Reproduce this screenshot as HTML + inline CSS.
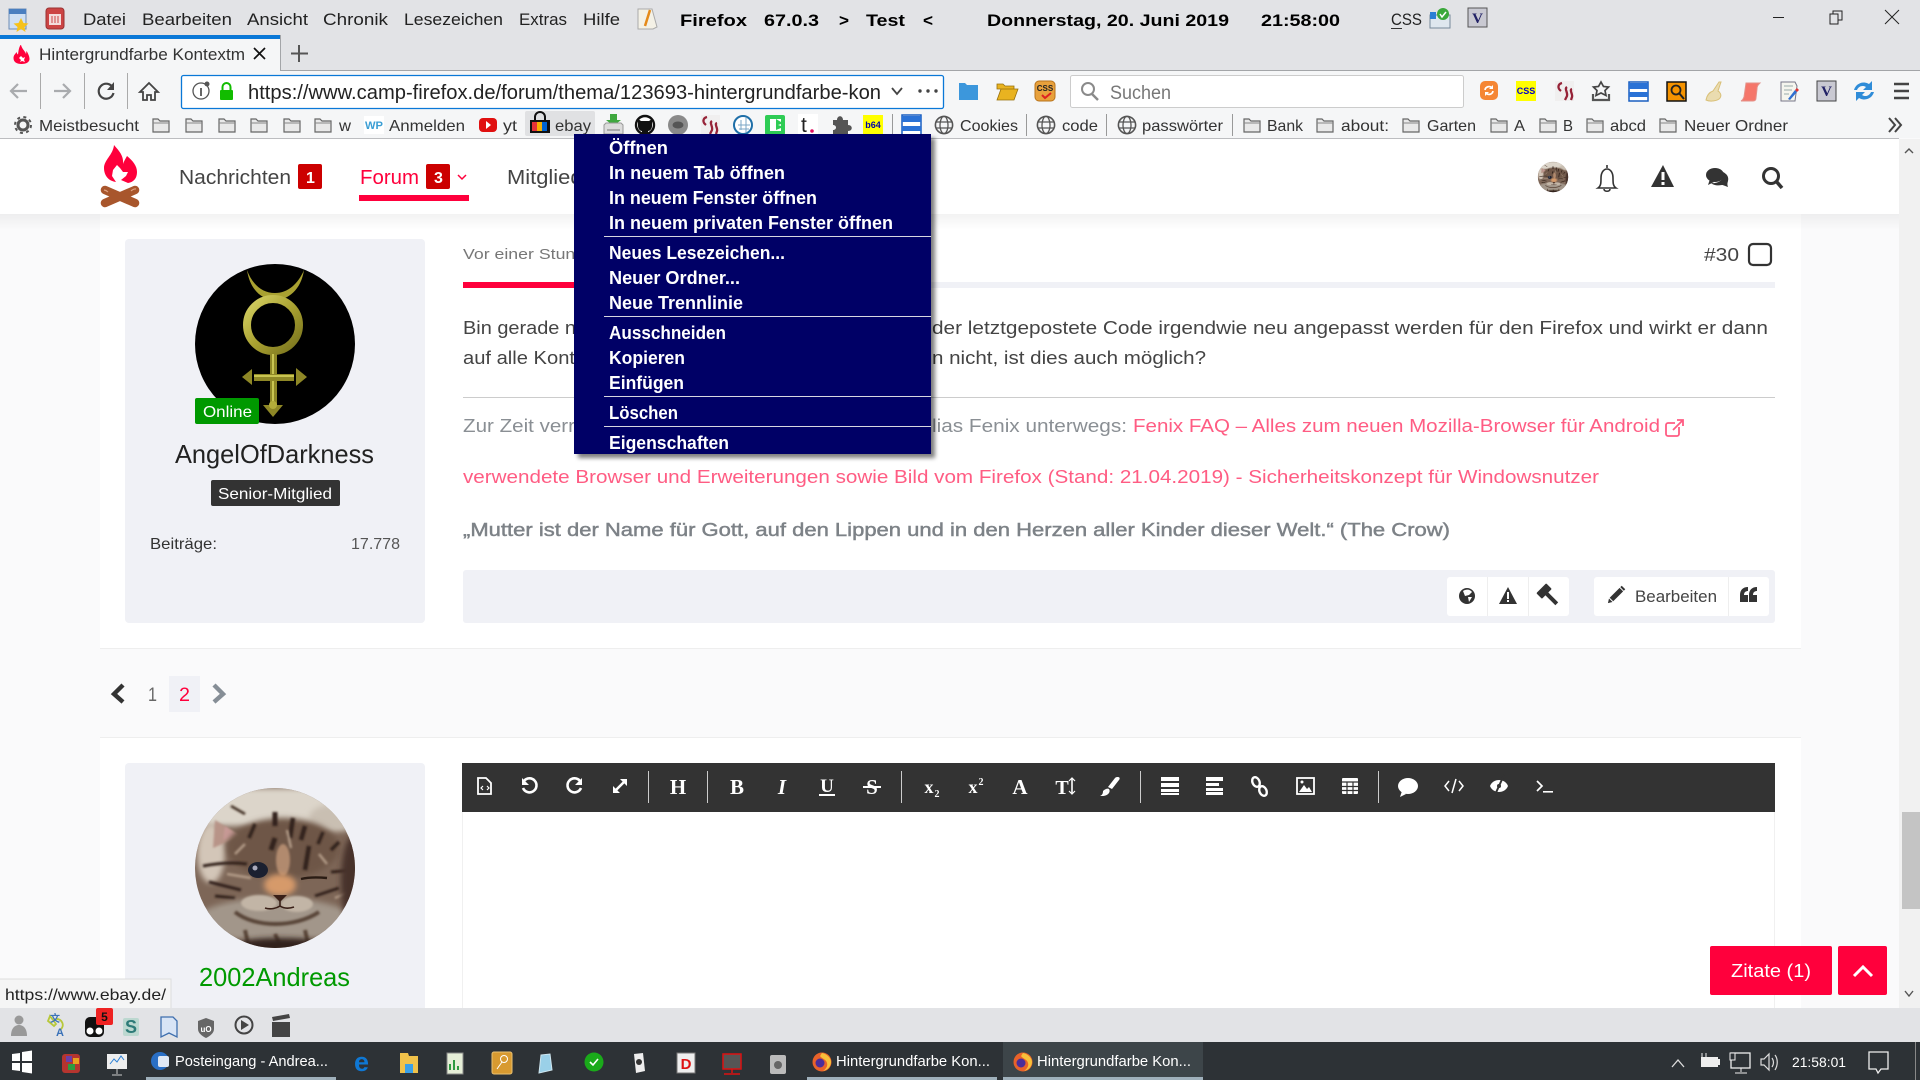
<!DOCTYPE html>
<html><head><meta charset="utf-8"><title>Hintergrundfarbe Kontextmenü</title>
<style>
html,body{margin:0;padding:0;background:#fafafb;overflow:hidden}
svg{display:block;font-family:"Liberation Sans",sans-serif}
.u{font-size:17px;fill:#222}.b{font-weight:bold;font-size:17px;fill:#000}
.m{font-weight:bold;font-size:18px;fill:#fff}
.p{font-size:18.4px;fill:#444}.g{font-size:18.4px;fill:#8a8f94}.l{font-size:18.4px;fill:#ff5c83}
.bm{font-size:16px;fill:#333}.t{font-size:15px;fill:#fff}
.ic{fill:#333}.w{fill:#fff}.f{fill:none;stroke:#fff;stroke-width:2}
.sf{font-family:"Liberation Serif",serif;font-weight:bold;fill:#fff;font-size:21px;text-anchor:middle}
</style></head><body>
<svg width="1920" height="1080" viewBox="0 0 1920 1080" xmlns="http://www.w3.org/2000/svg">
<defs>
<filter id="bl" x="-30%" y="-30%" width="160%" height="160%"><feGaussianBlur stdDeviation="3"/></filter>
<filter id="bs" x="-30%" y="-30%" width="160%" height="160%"><feGaussianBlur stdDeviation="1"/></filter>
<filter id="sh" x="-5%" y="-5%" width="110%" height="110%"><feGaussianBlur stdDeviation="2"/></filter>
<linearGradient id="hs" x1="0" y1="0" x2="0" y2="1"><stop offset="0" stop-color="#000" stop-opacity=".05"/><stop offset="1" stop-color="#000" stop-opacity="0"/></linearGradient>
<linearGradient id="gold" gradientUnits="userSpaceOnUse" x1="245" y1="295" x2="303" y2="355"><stop offset="0" stop-color="#dcd86c"/><stop offset=".5" stop-color="#a9a131"/><stop offset="1" stop-color="#6f6a1a"/></linearGradient>
<clipPath id="cc"><circle r="80"/></clipPath>
<symbol id="fo" viewBox="0 0 18 18" overflow="visible"><path d="M1 16V3h5l2 2h9v11z" fill="#e9e9e9" stroke="#666" stroke-width="1.2"/><path d="M1 7h16" stroke="#888" stroke-width="1"/></symbol>
<symbol id="gl" viewBox="0 0 20 20"><circle cx="10" cy="10" r="8.6" fill="none" stroke="#555" stroke-width="1.6"/><ellipse cx="10" cy="10" rx="4" ry="8.6" fill="none" stroke="#555" stroke-width="1.3"/><path d="M2 7h16M2 13h16" stroke="#555" stroke-width="1.3"/></symbol>
<g id="cat"><g clip-path="url(#cc)">
<rect x="-80" y="-80" width="160" height="160" fill="#7d6657"/>
<rect x="-80" y="-80" width="160" height="38" fill="#dcd5ca" filter="url(#bl)"/>
<ellipse cx="60" cy="-50" rx="26" ry="14" fill="#c9bfb2" filter="url(#bl)"/>
<ellipse cx="-64" cy="-15" rx="14" ry="30" fill="#d3c6b8" filter="url(#bl)"/>
<path d="M-62-20l2-28 26 16z" fill="#b89488" filter="url(#bs)"/><path d="M-52-28l2-14 12 9z" fill="#c79a96" filter="url(#bs)"/>
<path d="M-44-62l14 8" stroke="#3f2d22" stroke-width="2.5" filter="url(#bs)"/>
<ellipse cx="8" cy="-20" rx="56" ry="30" fill="#6e5646" filter="url(#bl)"/>
<g fill="none" stroke="#33241b" filter="url(#bs)">
<path d="M0-56l0 14M0-30l-4 12" stroke-width="5"/><path d="M18-50l-3 20M30-42l-4 14M34-22l-4 24" stroke-width="4.500"/><path d="M-20-44l-6 14M48-36l-5 12M64-26l-8 8" stroke-width="3.500"/>
<path d="M-72-2c16-3 30-4 44-2M-66 14l32 8M-60 28l20 2M40 28l24-8M56 4l24-2" stroke-width="3"/>
</g>
<g fill="none" stroke="#b39c88" stroke-width="2.500" filter="url(#bs)"><path d="M-30-24l-10 10M-48 6l24 4M12-38l4 18M44-14l8 10M60 30l14-6M-56 42l20-4"/></g>
<ellipse cx="8" cy="-8" rx="7" ry="16" fill="#b18a6e" filter="url(#bs)"/>
<ellipse cx="5" cy="17" rx="16" ry="11" fill="#d69a6a" filter="url(#bl)"/>
<ellipse cx="0" cy="52" rx="78" ry="22" fill="#a2968a" filter="url(#bl)"/>
<ellipse cx="-16" cy="35" rx="18" ry="8" fill="#c2b5a6" filter="url(#bs)"/><ellipse cx="22" cy="36" rx="16" ry="8" fill="#c2b5a6" filter="url(#bs)"/>
<path d="M-40 44c20 16 60 16 84 0M-30 62l4 18M0 66l6 14M30 62l4 18" stroke="#594437" stroke-width="4" fill="none" filter="url(#bs)"/>
<ellipse cx="5" cy="82" rx="55" ry="12" fill="#33221a" filter="url(#bl)"/>
<ellipse cx="78" cy="14" rx="12" ry="46" fill="#46302a" filter="url(#bl)"/>
<ellipse cx="-17" cy="2" rx="10" ry="8" fill="#1b2030"/><circle cx="-20" cy="0" r="2.500" fill="#aab"/>
<path d="M-2 27h14l-7 7z" fill="#3a2018"/><path d="M5 33v6M-10 40c6 2 12 0 15-2 3 2 8 3 14 1" stroke="#3a2018" stroke-width="1.600" fill="none"/>
<path d="M26 11c8-2 16-2 26-1" stroke="#2a1c14" stroke-width="2.400" fill="none"/>
</g></g>
</defs>

<!-- page background -->
<rect width="1920" height="1080" fill="#fafafb"/>
<rect x="100" y="214" width="1701" height="434" fill="#fff"/><rect x="100" y="648" width="1701" height="1" fill="#eee"/>
<rect x="100" y="738" width="1701" height="280" fill="#fff"/><rect x="100" y="737" width="1701" height="1" fill="#eee"/>

<!-- sidebar 1 -->
<rect x="125" y="239" width="300" height="384" rx="4" fill="#f0f1f6"/>
<circle cx="275" cy="344" r="80" fill="#000"/>
<path d="M247 270C252 284 262 293 275 293 288 293 298 284 304 270 301 290 288 300 275 300 262 300 250 290 247 270z" fill="#a9a131"/>
<ellipse cx="273" cy="325" rx="26" ry="26" fill="none" stroke="url(#gold)" stroke-width="8"/>
<rect x="270" y="354" width="7" height="58" fill="#8f8826"/><rect x="272" y="354" width="2" height="58" fill="#c9c552"/>
<rect x="254" y="374" width="40" height="7" fill="#8f8826"/><rect x="254" y="375" width="40" height="2" fill="#c9c552"/>
<path d="M242 377l10-8v16zM307 377l-11-9v18zM263 405h20l-10 12z" fill="#8e8726"/><circle cx="273" cy="405" r="4" fill="#b3ad3a"/>
<rect x="195" y="398" width="64" height="26" rx="2" fill="#090"/>
<text x="203" y="417" font-size="16" fill="#fff" textLength="49" lengthAdjust="spacingAndGlyphs">Online</text>
<text x="175" y="463" font-size="26" fill="#222" textLength="199" lengthAdjust="spacingAndGlyphs">AngelOfDarkness</text>
<rect x="211" y="480" width="129" height="26" rx="2" fill="#333"/>
<text x="218" y="499" font-size="16" fill="#fff" textLength="114" lengthAdjust="spacingAndGlyphs">Senior-Mitglied</text>
<text x="150" y="549" font-size="16" fill="#333" textLength="67" lengthAdjust="spacingAndGlyphs">Beiträge:</text>
<text x="351" y="549" font-size="16" fill="#555" textLength="49" lengthAdjust="spacingAndGlyphs">17.778</text>

<!-- post -->
<text x="463" y="259" font-size="15" fill="#777" textLength="132" lengthAdjust="spacingAndGlyphs">Vor einer Stunde</text>
<rect x="463" y="282" width="1312" height="6" fill="#f0f1f6"/><rect x="463" y="282" width="130" height="6" fill="#ff003c"/>
<text x="1704" y="261" font-size="18.4" fill="#444" textLength="35" lengthAdjust="spacingAndGlyphs">#30</text>
<rect x="1749" y="244" width="22" height="21" rx="4" fill="none" stroke="#333" stroke-width="2.200"/>
<text x="463" y="334" class="p" textLength="113" lengthAdjust="spacingAndGlyphs">Bin gerade n</text>
<text x="932" y="334" class="p" textLength="836" lengthAdjust="spacingAndGlyphs">der letztgepostete Code irgendwie neu angepasst werden für den Firefox und wirkt er dann</text>
<text x="463" y="364" class="p" textLength="112" lengthAdjust="spacingAndGlyphs">auf alle Kont</text>
<text x="932" y="364" class="p" textLength="274" lengthAdjust="spacingAndGlyphs">n nicht, ist dies auch möglich?</text>
<rect x="463" y="397" width="1312" height="1" fill="#ccc"/>
<text x="463" y="432" class="g" textLength="112" lengthAdjust="spacingAndGlyphs">Zur Zeit verr</text>
<text x="932" y="432" class="g" textLength="195" lengthAdjust="spacingAndGlyphs">lias Fenix unterwegs:</text>
<text x="1133" y="432" class="l" textLength="527" lengthAdjust="spacingAndGlyphs">Fenix FAQ – Alles zum neuen Mozilla-Browser für Android</text>
<g fill="none" stroke="#ff5c83" stroke-width="1.800"><path d="M1679 427v7a2 2 0 0 1-2 2h-9a2 2 0 0 1-2-2v-9a2 2 0 0 1 2-2h7"/><path d="M1673 430l10-10M1677 420h6v6"/></g>
<text x="463" y="483" class="l" textLength="1136" lengthAdjust="spacingAndGlyphs">verwendete Browser und Erweiterungen sowie Bild vom Firefox (Stand: 21.04.2019) - Sicherheitskonzept für Windowsnutzer</text>
<text x="463" y="536" class="g" style="fill:#7d8287;stroke:#7d8287;stroke-width:.45" textLength="987" lengthAdjust="spacingAndGlyphs">„Mutter ist der Name für Gott, auf den Lippen und in den Herzen aller Kinder dieser Welt.“ (The Crow)</text>

<!-- post footer -->
<rect x="463" y="570" width="1312" height="53" rx="3" fill="#f0f1f6"/>
<rect x="1447" y="577" width="122" height="39" rx="3" fill="#fff"/><rect x="1487" y="577" width="1" height="39" fill="#eee"/><rect x="1528" y="577" width="1" height="39" fill="#eee"/>
<rect x="1594" y="577" width="175" height="39" rx="3" fill="#fff"/><rect x="1728" y="577" width="1" height="39" fill="#eee"/>
<circle cx="1467" cy="596" r="8" fill="#333"/><path d="M1463 591c3-2 7-2 9 1l-3 3-4 1zM1468 597l4 0-3 5z" fill="#fff"/>
<path d="M1508 587l9 17h-18z" fill="#333"/><path d="M1507 592h2v7h-2zM1507 600h2v2h-2z" fill="#fff"/>
<g fill="#333" transform="rotate(-45 1549 596)"><rect x="1542" y="585" width="14" height="8" rx="1"/><rect x="1547" y="592" width="4" height="15"/></g>
<g transform="rotate(45 1615 596)" fill="#333"><rect x="1612.500" y="587" width="5" height="14"/><path d="M1612.500 602h5l-2.500 4z"/><rect x="1612.500" y="584" width="5" height="2"/></g>
<text x="1635" y="602" font-size="16.500" fill="#444" textLength="82" lengthAdjust="spacingAndGlyphs">Bearbeiten</text>
<path d="M1748 587c-5 0-8 3-8 8v7h8v-7h-4c0-3 2-4 4-4zM1757 587c-5 0-8 3-8 8v7h8v-7h-4c0-3 2-4 4-4z" fill="#333"/>

<!-- pagination -->
<path d="M123 685l-9 9 9 8" fill="none" stroke="#333" stroke-width="4.400"/>
<text x="148" y="701" font-size="19" fill="#666" textLength="9" lengthAdjust="spacingAndGlyphs">1</text>
<rect x="169" y="676" width="31" height="36" fill="#f0f1f6"/>
<text x="179" y="701" font-size="19" fill="#ff003c" textLength="11" lengthAdjust="spacingAndGlyphs">2</text>
<path d="M214 685l9 9-9 8" fill="none" stroke="#868e96" stroke-width="4.400"/>

<!-- second post -->
<rect x="125" y="763" width="300" height="260" rx="4" fill="#f0f1f6"/>
<use href="#cat" transform="translate(275 868)"/>
<text x="199" y="986" font-size="26" fill="#090" textLength="151" lengthAdjust="spacingAndGlyphs">2002Andreas</text>
<rect x="462" y="763" width="1313" height="49" fill="#333"/>
<rect x="462" y="812" width="1" height="200" fill="#f0f0f0"/><rect x="1774" y="812" width="1" height="200" fill="#f0f0f0"/>
<g fill="#ccc"><rect x="648" y="771" width="1" height="32"/><rect x="707" y="771" width="1" height="32"/><rect x="901" y="771" width="1" height="32"/><rect x="1140" y="771" width="1" height="32"/><rect x="1378" y="771" width="1" height="32"/></g>
<!-- editor icons -->
<path d="M478 778h8l5 5v11h-13z" fill="none" stroke="#fff" stroke-width="1.800"/><path d="M483 786l-2 2 2 2M487 786l2 2-2 2" fill="none" stroke="#fff" stroke-width="1.200"/>
<path d="M524 781a7 7 0 1 1-1 7" fill="none" stroke="#fff" stroke-width="2.600"/><path d="M522 778v7h7z" class="w"/>
<path d="M580 781a7 7 0 1 0 1 7" fill="none" stroke="#fff" stroke-width="2.600"/><path d="M582 778v7h-7z" class="w"/>
<path d="M615 791l10-10" stroke="#fff" stroke-width="2.600"/><path d="M620 779h7v7zM613 786v7h7z" class="w"/>
<text x="678" y="794" class="sf">H</text>
<text x="737" y="794" class="sf">B</text>
<text x="782" y="794" class="sf" font-style="italic">I</text>
<text x="827" y="792" class="sf" style="font-size:19px">U</text><rect x="819" y="794" width="16" height="2" fill="#fff"/>
<text x="872" y="794" class="sf">S</text><rect x="863" y="786" width="18" height="2" fill="#fff"/>
<text x="929" y="793" class="sf" style="font-size:18px">x</text><text x="937" y="797" class="sf" style="font-size:10px">2</text>
<text x="973" y="793" class="sf" style="font-size:18px">x</text><text x="981" y="785" class="sf" style="font-size:10px">2</text>
<text x="1020" y="794" class="sf">A</text>
<text x="1062" y="794" class="sf" style="font-size:20px">T</text><path d="M1072 779v14" stroke="#fff" stroke-width="1.600"/><path d="M1069 781l3-3 3 3M1069 791l3 3 3-3" stroke="#fff" fill="none" stroke-width="1.200"/>
<path d="M1118 777c2 0 2 2 1 3l-7 9-4-2 7-9c1-1 2-1 3-1zM1103 791c2-2 5-3 6-2 2 3-1 7-7 7-1 0-1 0-2 0 2-1 3-2 3-5z" class="w"/>
<g fill="#fff"><path d="M1161 777h18v4h-18zM1161 783h18v4h-18zM1161 789h18v3h-18zM1161 793h18v2h-18z"/><path d="M1206 777h17v4h-17zM1206 783h13v3h-13zM1206 788h17v3h-17zM1206 792h17v3h-17z"/></g>
<g fill="none" stroke="#fff" stroke-width="2.400"><ellipse cx="1256" cy="782" rx="3.500" ry="5" transform="rotate(-25 1256 782)"/><ellipse cx="1263" cy="791" rx="3.500" ry="5" transform="rotate(-25 1263 791)"/></g>
<rect x="1297" y="778" width="17" height="16" fill="none" stroke="#fff" stroke-width="1.800"/><path d="M1299 792l5-7 3 4 2-2 3 5z" class="w"/><circle cx="1302" cy="782" r="1.500" class="w"/>
<rect x="1342" y="778" width="16" height="16" rx="1" class="w"/><path d="M1347 782v12M1353 782v12M1342 782h16M1342 786.500h16M1342 790.500h16" stroke="#333" stroke-width="1.200"/>
<ellipse cx="1408" cy="786" rx="10" ry="8" class="w"/><path d="M1402 791l-2 6 6-3z" class="w"/>
<path d="M1449 781l-4 5 4 5M1459 781l4 5-4 5M1456 779l-4 14" fill="none" stroke="#fff" stroke-width="1.500"/>
<path d="M1490 786c3-8 15-8 18 0-3 8-15 8-18 0z" class="w"/><path d="M1494 797l10-22" stroke="#333" stroke-width="2"/><circle cx="1499" cy="786" r="2" fill="#333"/>
<path d="M1537 781l5 5-5 5" fill="none" stroke="#fff" stroke-width="1.700"/><rect x="1543" y="791" width="10" height="1.600" class="w"/>

<!-- scrollbar -->
<rect x="1899" y="139" width="21" height="869" fill="#f1f1f1"/>
<rect x="1902" y="812" width="18" height="97" fill="#c4c4c4"/>
<path d="M1905 153l4-4 4 4M1905 991l4 5 4-5" fill="none" stroke="#555" stroke-width="1.400"/>

<!-- Zitate -->
<rect x="1710" y="946" width="122" height="49" rx="2" fill="#ff003c"/>
<text x="1731" y="977" font-size="18.400" fill="#fff" textLength="80" lengthAdjust="spacingAndGlyphs">Zitate (1)</text>
<rect x="1838" y="946" width="49" height="49" rx="2" fill="#ff003c"/>
<path d="M1854 976l9-9 9 9" fill="none" stroke="#fff" stroke-width="3"/>

<!-- header -->
<rect y="214" width="1899" height="16" fill="url(#hs)"/>
<rect y="139" width="1899" height="75" fill="#fff"/>
<path d="M114 145C118 150 124 155 123 164 124 161 126 158 127 156 133 161 137 166 137 172 137 178 134 182 128 183L121 180 126 176 128 172 123 172 120 168 117 165 113 170 112 176 116 182C108 181 104 175 104 168 104 160 113 155 114 145z" fill="#ff003c"/>
<g fill="none" stroke-linecap="round"><path d="M105 190l30 13M135 190l-30 13" stroke="#a8562c" stroke-width="8.500"/></g>
<path d="M136 189a2 4 60 0 0-5 2M104 190a2 4-60 0 1 4 2" stroke="#e0a080" stroke-width="1.200" fill="none"/>
<text x="179" y="184" font-size="20" fill="#444" textLength="112" lengthAdjust="spacingAndGlyphs">Nachrichten</text>
<rect x="298" y="164" width="24" height="25" rx="2" fill="#c00"/><text x="306" y="183" font-size="16" font-weight="bold" fill="#fff">1</text>
<text x="360" y="184" font-size="20" fill="#ff003c" textLength="59" lengthAdjust="spacingAndGlyphs">Forum</text>
<rect x="426" y="164" width="24" height="25" rx="2" fill="#c00"/><text x="434" y="183" font-size="16" font-weight="bold" fill="#fff">3</text>
<path d="M458 175l4 4 4-4" fill="none" stroke="#ff003c" stroke-width="1.500"/>
<rect x="359" y="195" width="110" height="6" fill="#ff003c"/>
<text x="507" y="184" font-size="20" fill="#444" textLength="95" lengthAdjust="spacingAndGlyphs">Mitglieder</text>
<use href="#cat" transform="translate(1553 177) scale(.19)"/>
<path d="M1598 188c3-2 3-5 3-10 0-6 3-9 6-9s6 3 6 9c0 5 0 8 3 10z" fill="none" stroke="#333" stroke-width="1.600"/><path d="M1607 165v3M1604 189c0 3 6 3 6 0" stroke="#333" stroke-width="1.600" fill="none"/>
<path d="M1663 165l11 22h-23z" fill="#333"/><path d="M1661.500 172h3v8h-3zM1661.500 182h3v3h-3z" fill="#fff"/>
<ellipse cx="1715" cy="175" rx="9" ry="7" fill="#333"/><path d="M1710 179l-2 6 6-3z" fill="#333"/><path d="M1723 172c4 2 6 5 5 9-.5 2-1 3 0 6-3-1-5-2-6-2-5 1-9 0-11-2 8 1 14-4 12-11z" fill="#333"/>
<circle cx="1771" cy="176" r="7.500" fill="none" stroke="#333" stroke-width="3"/><path d="M1776 181l6 7" stroke="#333" stroke-width="3.600"/>

<!-- title bar -->
<rect width="1920" height="70" fill="#e2e3e6"/>
<rect x="9" y="9" width="17" height="20" fill="#cfe0f4" stroke="#6d8cb5"/><rect x="9" y="9" width="17" height="5" fill="#4a7fc0"/><path d="M21 18l2.500 5 5 .5-4 3.500 1 5-4.500-3-4.500 3 1-5-4-3.500 5-.5z" fill="#f6c21b"/>
<rect x="46" y="8" width="18" height="21" rx="3" fill="#c44" stroke="#933"/><rect x="49" y="14" width="12" height="11" fill="#f3dcdc"/><path d="M52 16v7M55 16v7M58 16v7" stroke="#c44"/>
<text x="83" y="25" class="u" textLength="43" lengthAdjust="spacingAndGlyphs">Datei</text>
<text x="142" y="25" class="u" textLength="90" lengthAdjust="spacingAndGlyphs">Bearbeiten</text>
<text x="247" y="25" class="u" textLength="61" lengthAdjust="spacingAndGlyphs">Ansicht</text>
<text x="323" y="25" class="u" textLength="65" lengthAdjust="spacingAndGlyphs">Chronik</text>
<text x="404" y="25" class="u" textLength="99" lengthAdjust="spacingAndGlyphs">Lesezeichen</text>
<text x="519" y="25" class="u" textLength="48" lengthAdjust="spacingAndGlyphs">Extras</text>
<text x="583" y="25" class="u" textLength="37" lengthAdjust="spacingAndGlyphs">Hilfe</text>
<path d="M638 9h14l5 18-4 2h-15z" fill="#f4f1e6" stroke="#aaa"/><path d="M650 10l-5 16" stroke="#e58a1a" stroke-width="2.500"/>
<text x="680" y="26" class="b" textLength="67" lengthAdjust="spacingAndGlyphs">Firefox</text>
<text x="764" y="26" class="b" textLength="55" lengthAdjust="spacingAndGlyphs">67.0.3</text>
<text x="839" y="26" class="b" textLength="10" lengthAdjust="spacingAndGlyphs">&gt;</text>
<text x="866" y="26" class="b" textLength="39" lengthAdjust="spacingAndGlyphs">Test</text>
<text x="923" y="26" class="b" textLength="10" lengthAdjust="spacingAndGlyphs">&lt;</text>
<text x="987" y="26" class="b" textLength="242" lengthAdjust="spacingAndGlyphs">Donnerstag, 20. Juni 2019</text>
<text x="1261" y="26" class="b" textLength="79" lengthAdjust="spacingAndGlyphs">21:58:00</text>
<text x="1391" y="25" class="u" textLength="31" lengthAdjust="spacingAndGlyphs">CSS</text><rect x="1391" y="28" width="11" height="1" fill="#333"/>
<rect x="1430" y="15" width="20" height="13" fill="#dfe7ee" stroke="#789"/><path d="M1430 12h6v7h-6z" fill="#2a7fd5"/><circle cx="1443" cy="14" r="6" fill="#3aa83a"/><path d="M1440 14l2 3 4-5" stroke="#fff" fill="none" stroke-width="1.500"/>
<rect x="1468" y="8" width="19" height="19" fill="#c9c9d2" stroke="#555"/><text x="1477.500" y="23" text-anchor="middle" font-family="Liberation Serif" font-weight="bold" font-size="15" fill="#226">V</text>
<rect x="1773" y="17" width="11" height="1" fill="#222"/>
<rect x="1830" y="14" width="8" height="10" fill="none" stroke="#222"/><path d="M1833 14v-3h9v9h-4" fill="none" stroke="#222"/>
<path d="M1885 10l14 14M1899 10l-14 14" stroke="#222" stroke-width="1"/>
<!-- tab -->
<rect y="70" width="1920" height="1" fill="#a3a5a8"/>
<path d="M0 35h280v36H0z" fill="#f5f6f7"/><rect x="280" y="35" width="1" height="35" fill="#a3a5a8"/><rect y="35" width="280" height="4" fill="#0a78d7"/>
<path d="M21 45c1 4 4 6 5 9 .5-1 0-2 .5-3 2 3 3 6 3 8 0 3-3 5-8 5-5 0-8-2-8-6 0-3 2-4 3-6 .5 1 .5 2 1.500 2.500 .5-3 .5-6 2.500-9.500z" fill="#ff003c"/><path d="M21 56l2 2 2-1-1 3 1 2-3-1-2 1 1-2-2-2z" fill="#fff"/>
<text x="39" y="60" font-size="17" fill="#333" textLength="206" lengthAdjust="spacingAndGlyphs">Hintergrundfarbe Kontextm</text>
<path d="M254 48l11 11M265 48l-11 11" stroke="#111" stroke-width="1.700"/>
<path d="M299 45v17M291 53.500h17" stroke="#555" stroke-width="2"/>
<!-- nav toolbar -->
<rect y="71" width="1920" height="67" fill="#f5f6f7"/><rect y="138" width="1899" height="1" fill="#bcbdc0"/>
<path d="M27 91H12M18 84l-7 7 7 7" fill="none" stroke="#a9abae" stroke-width="2.200"/>
<rect x="40" y="73" width="1" height="36" fill="#aaa"/>
<path d="M54 91h15M63 84l7 7-7 7" fill="none" stroke="#a9abae" stroke-width="2.200"/>
<rect x="84" y="73" width="1" height="36" fill="#aaa"/>
<path d="M113 88a7.500 7.500 0 1 0 .5 5" fill="none" stroke="#444" stroke-width="2.200"/><path d="M114 82v8h-7z" fill="#444"/>
<rect x="127" y="73" width="1" height="36" fill="#aaa"/>
<path d="M149 83l-9 9h3v8h4v-5h4v5h4v-8h3z" fill="#f5f6f7" stroke="#444" stroke-width="1.800"/>
<rect x="181.500" y="75.500" width="762" height="33" rx="2" fill="#fff" stroke="#0a78d7" stroke-width="1.300"/>
<circle cx="201" cy="91" r="8" fill="none" stroke="#555" stroke-width="1.300"/><path d="M201 88v8" stroke="#555" stroke-width="1.800"/><circle cx="207" cy="84" r="2.500" fill="#555"/>
<rect x="220" y="90" width="13" height="10" rx="1" fill="#12bc00"/><path d="M222.500 90v-3a4 4 0 0 1 8 0v3" fill="none" stroke="#12bc00" stroke-width="2"/>
<text x="248" y="99" font-size="20" fill="#222" textLength="633" lengthAdjust="spacingAndGlyphs">https://www.camp-firefox.de/forum/thema/123693-hintergrundfarbe-kon</text>
<path d="M892 88l5 6 5-6" fill="none" stroke="#444" stroke-width="1.800"/>
<circle cx="920" cy="91" r="1.700" fill="#444"/><circle cx="928" cy="91" r="1.700" fill="#444"/><circle cx="936" cy="91" r="1.700" fill="#444"/>
<path d="M959 83h6l2 2h11v15h-19z" fill="#3c97dc"/>
<path d="M997 84h6l2 2h9v3h-17zM997 100l4-11h17l-4 11z" fill="#e9b320" stroke="#97700c" stroke-width=".8"/>
<rect x="1035" y="81" width="20" height="20" rx="4" fill="#e8a13c" stroke="#b8741c"/><text x="1045" y="91" text-anchor="middle" font-size="8" font-weight="bold" fill="#222">CSS</text><path d="M1042 95l3 3 6-5" stroke="#d22" stroke-width="2" fill="none"/>
<rect x="1070.500" y="75.500" width="393" height="32" rx="2" fill="#fff" stroke="#ccc"/>
<circle cx="1088" cy="89" r="6" fill="none" stroke="#8a8a8a" stroke-width="2"/><path d="M1092 94l6 6" stroke="#8a8a8a" stroke-width="2.400"/>
<text x="1110" y="99" font-size="19" fill="#777" textLength="61" lengthAdjust="spacingAndGlyphs">Suchen</text>
<rect x="1480" y="81" width="18" height="19" rx="5" fill="#f58634"/><path d="M1485 90a4 4 0 0 1 7-2M1493 91a4 4 0 0 1-7 2" fill="none" stroke="#fff" stroke-width="1.700"/><path d="M1493 85v4h-4zM1485 96v-4h4z" fill="#fff"/>
<rect x="1516" y="81" width="20" height="20" fill="#ff0"/><text x="1526" y="94" text-anchor="middle" font-size="9" font-weight="bold" fill="#00c">CSS</text>
<rect x="1555" y="81" width="19" height="20" fill="#f0efef"/><path d="M1562 83c-4 1-5 5-1 8M1567 87c-3 2 1 5 0 9l-2 4M1572 89c-3 1 1 5 0 8l-1 3" fill="none" stroke="#962338" stroke-width="2.300"/>
<path d="M1601 82l2.500 4.500 5 .5-3.500 3.500 1 5-5-2.500-5 2.500 1-5-3.500-3.500 5-.5z" fill="#f5f6f7" stroke="#444" stroke-width="1.700"/><path d="M1593 94v6h16v-6" fill="none" stroke="#555" stroke-width="2.200"/>
<rect x="1629" y="82" width="19" height="19" fill="#fff" stroke="#1a5fc0" stroke-width="1.500"/><rect x="1629" y="83" width="19" height="6" fill="#2a72d6"/><rect x="1629" y="92" width="19" height="5" fill="#2a72d6"/>
<rect x="1667" y="82" width="19" height="19" fill="#f59300" stroke="#111" stroke-width="1.500"/><circle cx="1676" cy="90" r="4.500" fill="none" stroke="#222" stroke-width="1.800"/><path d="M1679 93l5 6" stroke="#222" stroke-width="2"/>
<path d="M1719 82l-6 9c-3 1-6 4-7 9 4 2 12 1 14-2 2-3 0-6-2-7l3-9z" fill="#eadcb0" stroke="#d9c078"/>
<path d="M1746 83h14c-2 2-3 3-3 6l-1 9c0 2-1 3-3 3h-12c2-1 2-2 3-4z" fill="#f5766a" stroke="#e4928a"/>
<path d="M1781 82h14l2 4-2 15h-14z" fill="#f5f5ee" stroke="#778"/><path d="M1784 86h9M1784 90h8M1784 94h5" stroke="#9aa" stroke-width="1"/><path d="M1788 99l7-9 2 2-7 8z" fill="#2f6fd0"/><path d="M1795 90l2-2 2 2-2 2z" fill="#d33"/>
<rect x="1817" y="81" width="19" height="20" fill="#c9c9d2" stroke="#444"/><text x="1826.500" y="96" text-anchor="middle" font-family="Liberation Serif" font-weight="bold" font-size="15" fill="#226">V</text>
<path d="M1854 90a10 10 0 0 1 15-6l3-3v9h-9l3-3a6 6 0 0 0-9 3zM1874 92a10 10 0 0 1-15 6l-3 3v-9h9l-3 3a6 6 0 0 0 9-3z" fill="#2f8cd8"/>
<path d="M1894 84h15M1894 91h15M1894 98h15" stroke="#444" stroke-width="2.400"/>
<!-- bookmarks -->
<circle cx="23" cy="125" r="5" fill="none" stroke="#555" stroke-width="3"/><circle cx="23" cy="125" r="8" fill="none" stroke="#555" stroke-width="2" stroke-dasharray="3 3.300"/>
<text x="39" y="131" class="bm" textLength="100" lengthAdjust="spacingAndGlyphs">Meistbesucht</text>
<use href="#fo" x="152" y="116" width="18" height="18"/><use href="#fo" x="185" y="116" width="18" height="18"/><use href="#fo" x="218" y="116" width="18" height="18"/><use href="#fo" x="250" y="116" width="18" height="18"/><use href="#fo" x="283" y="116" width="18" height="18"/><use href="#fo" x="314" y="116" width="18" height="18"/>
<text x="339" y="131" class="bm" textLength="12" lengthAdjust="spacingAndGlyphs">w</text>
<rect x="364" y="116" width="20" height="18" fill="#fff"/><text x="365" y="129" font-size="11" font-weight="bold" fill="#3b9ed4" textLength="18" lengthAdjust="spacingAndGlyphs">WP</text>
<text x="389" y="131" class="bm" textLength="76" lengthAdjust="spacingAndGlyphs">Anmelden</text>
<rect x="479" y="118" width="18" height="14" rx="4" fill="#e01010"/><path d="M486 121l5 4-5 4z" fill="#fff"/>
<text x="503" y="131" class="bm" textLength="14" lengthAdjust="spacingAndGlyphs">yt</text>
<rect x="525" y="111" width="70" height="25" rx="2" fill="#e0e1e3"/>
<rect x="530" y="120" width="20" height="13" fill="#111"/><rect x="532" y="122" width="5" height="9" fill="#e53238"/><rect x="537" y="122" width="5" height="9" fill="#f5af02"/><rect x="542" y="122" width="5" height="9" fill="#0064d2"/><path d="M535 120v-3a5 5 0 0 1 10 0v3" fill="none" stroke="#111" stroke-width="2"/>
<text x="555" y="131" class="bm" textLength="36" lengthAdjust="spacingAndGlyphs">ebay</text>
<path d="M610 114h7v6h4l-7.500 6-7.500-6h4z" fill="#3fa83f"/><path d="M604 125l2-2h15l2 2v9h-19z" fill="#dcdcdc" stroke="#999"/><rect x="607" y="129" width="13" height="2" fill="#aaa"/>
<circle cx="645" cy="125" r="9" fill="#fff" stroke="#111" stroke-width="2.400"/><path d="M638 119l3 2h8l3-2v7c0 3-2 5-4 5v4h-6v-4c-2 0-4-2-4-5z" fill="#111"/>
<circle cx="678" cy="125" r="10" fill="#8a8a8a"/><ellipse cx="678" cy="125" rx="5.500" ry="3.500" fill="#555"/>
<rect x="701" y="115" width="19" height="20" fill="#f0efef"/><path d="M707 117c-4 1-5 5-1 8M712 121c-3 2 1 5 0 9l-2 4M717 123c-3 1 1 5 0 8l-1 3" fill="none" stroke="#962338" stroke-width="2.300"/>
<circle cx="743" cy="125" r="9" fill="#fff" stroke="#1f6fa8" stroke-width="2"/><path d="M746 117v16M741 120v10M738 125h12M739 129h10" stroke="#7aa6c6"/>
<rect x="765" y="115" width="20" height="20" rx="2" fill="#2ecc55"/><rect x="770" y="119" width="11" height="12" fill="#fff"/><path d="M776 119l5 3v2l-3 1 3 1v2l-5 2z" fill="#2ecc55"/>
<rect x="798" y="114" width="20" height="22" fill="#fff"/><text x="801" y="132" font-size="21" fill="#222">t</text><circle cx="812" cy="131" r="1.800" fill="#e01060"/>
<path d="M833 120h4c0-5 6-5 6 0h5v5c5 0 5 6 0 6v4h-15v-5c4 0 4-5 0-5z" fill="#555"/>
<rect x="863" y="115" width="20" height="20" fill="#ff0"/><text x="873" y="128" text-anchor="middle" font-size="9" font-weight="bold" fill="#00a">b64</text>
<rect x="892" y="114" width="1" height="24" fill="#999"/>
<rect x="902" y="115" width="19" height="20" fill="#fff" stroke="#1a5fc0" stroke-width="1.500"/><rect x="902" y="116" width="19" height="6" fill="#2a72d6"/><rect x="902" y="126" width="19" height="5" fill="#2a72d6"/>
<use href="#gl" x="934" y="115" width="20" height="20"/>
<text x="960" y="131" class="bm" textLength="58" lengthAdjust="spacingAndGlyphs">Cookies</text><rect x="1026" y="114" width="1" height="22" fill="#999"/>
<use href="#gl" x="1036" y="115" width="20" height="20"/>
<text x="1062" y="131" class="bm" textLength="36" lengthAdjust="spacingAndGlyphs">code</text><rect x="1106" y="114" width="1" height="22" fill="#999"/>
<use href="#gl" x="1117" y="115" width="20" height="20"/>
<text x="1142" y="131" class="bm" textLength="81" lengthAdjust="spacingAndGlyphs">passwörter</text><rect x="1232" y="114" width="1" height="22" fill="#999"/>
<use href="#fo" x="1243" y="116" width="18" height="18"/><text x="1267" y="131" class="bm" textLength="36" lengthAdjust="spacingAndGlyphs">Bank</text>
<use href="#fo" x="1316" y="116" width="18" height="18"/><text x="1341" y="131" class="bm" textLength="48" lengthAdjust="spacingAndGlyphs">about:</text>
<use href="#fo" x="1402" y="116" width="18" height="18"/><text x="1427" y="131" class="bm" textLength="49" lengthAdjust="spacingAndGlyphs">Garten</text>
<use href="#fo" x="1490" y="116" width="18" height="18"/><text x="1514" y="131" class="bm" textLength="11" lengthAdjust="spacingAndGlyphs">A</text>
<use href="#fo" x="1539" y="116" width="18" height="18"/><text x="1563" y="131" class="bm" textLength="10" lengthAdjust="spacingAndGlyphs">B</text>
<use href="#fo" x="1586" y="116" width="18" height="18"/><text x="1610" y="131" class="bm" textLength="36" lengthAdjust="spacingAndGlyphs">abcd</text>
<use href="#fo" x="1659" y="116" width="18" height="18"/><text x="1684" y="131" class="bm" textLength="104" lengthAdjust="spacingAndGlyphs">Neuer Ordner</text>
<path d="M1889 118l6 7-6 7M1895 118l6 7-6 7" fill="none" stroke="#444" stroke-width="2"/>

<!-- status tooltip and addon bar -->
<rect x="-1" y="979" width="172" height="30" fill="#f5f5f5" stroke="#ddd"/>
<text x="5" y="1000" font-size="16" fill="#222" textLength="161" lengthAdjust="spacingAndGlyphs">https://www.ebay.de/</text>
<rect y="1008" width="1920" height="34" fill="#e2e3e6"/>
<circle cx="19" cy="1020" r="4.500" fill="#999"/><path d="M11 1036c0-8 4-11 8-11s8 3 8 11z" fill="#999"/>
<path d="M50 1016l6 8-2 2-6-5zM60 1030a6 6 0 0 0-4-11" fill="none" stroke="#b7c83a" stroke-width="1.800"/><text x="56" y="1036" font-size="11" font-weight="bold" fill="#3a72b8">A</text><text x="50" y="1022" font-size="10" font-weight="bold" fill="#3a72b8" font-family="Liberation Sans,Noto Sans CJK SC,sans-serif">文</text>
<rect x="85" y="1017" width="19" height="20" rx="5" fill="#111"/><circle cx="90" cy="1031" r="3.500" fill="#fff"/><circle cx="99" cy="1031" r="3.500" fill="#fff"/>
<rect x="96" y="1008" width="17" height="17" rx="2" fill="#e22"/><text x="104.500" y="1021" text-anchor="middle" font-size="12" font-weight="bold" fill="#111">5</text>
<rect x="123" y="1018" width="16" height="18" rx="2" fill="#bcd8d0"/><text x="131" y="1033" text-anchor="middle" font-size="18" font-weight="bold" fill="#2e7b78">S</text>
<path d="M161 1017h12l4 4v16l-8-4-8 4z" fill="#d8e4f5" stroke="#3f6fae" stroke-width="1.300"/>
<path d="M206 1018l8 3v8c0 4-4 7-8 9-4-2-8-5-8-9v-8z" fill="#666"/><text x="206" y="1032" text-anchor="middle" font-size="8" font-weight="bold" fill="#fff">uO</text>
<circle cx="244" cy="1025" r="8.500" fill="none" stroke="#444" stroke-width="2"/><path d="M241 1020l8 5-8 5z" fill="#444"/>
<rect x="272" y="1022" width="18" height="15" fill="#444"/><path d="M272 1017l17-3 1 4-17 3z" fill="#444"/>
<!-- taskbar -->
<rect y="1042" width="1920" height="38" fill="#2d3236"/>
<rect x="1003" y="1042" width="200" height="38" fill="#3d4549"/>
<rect x="146" y="1077" width="190" height="3" fill="#9fb0bb"/><rect x="807" y="1077" width="190" height="3" fill="#9fb0bb"/><rect x="1003" y="1077" width="200" height="3" fill="#9fb0bb"/>
<path d="M12 1054l8-1v8h-8zM22 1052l10-1.500v10.500h-10zM12 1063h8v8l-8-1zM22 1063h10v10.500l-10-1.500z" fill="#fff"/>
<rect x="62" y="1054" width="18" height="19" rx="3" fill="#b5352f"/><rect x="66" y="1056" width="6" height="6" fill="#6b3fa8"/><rect x="73" y="1058" width="6" height="6" fill="#e8a020"/><rect x="68" y="1064" width="7" height="6" fill="#2f9b40"/>
<rect x="107" y="1054" width="20" height="15" fill="#eee"/><path d="M110 1064l4-5 3 3 4-6 3 4" stroke="#2a7fd5" fill="none"/><path d="M117 1069v5M112 1075h10" stroke="#ccc"/>
<circle cx="160" cy="1061" r="9" fill="#2a6fc5"/><rect x="158" y="1056" width="11" height="11" rx="2" fill="#dfe8f5"/>
<text x="175" y="1066" class="t" textLength="153" lengthAdjust="spacingAndGlyphs">Posteingang - Andrea...</text>
<text x="354" y="1071" font-size="27" font-weight="bold" fill="#0f78d4">e</text>
<path d="M400 1053h8l1 3h9v17h-18z" fill="#f0c24a"/><rect x="405" y="1064" width="8" height="9" fill="#3aa0e8"/>
<rect x="447" y="1053" width="16" height="21" fill="#e6efd8" stroke="#888"/><path d="M450 1070v-6M454 1070v-10M458 1070v-4" stroke="#2f9b40" stroke-width="2"/>
<rect x="492" y="1052" width="20" height="22" rx="2" fill="#d89a30" stroke="#eac172"/><circle cx="504" cy="1059" r="3.500" fill="none" stroke="#fff"/><path d="M502 1062l-5 7" stroke="#fff"/>
<path d="M541 1055l9-1 2 16-13 3z" fill="#9ad0e8" stroke="#cfe6ef"/>
<circle cx="594" cy="1062" r="9.500" fill="#1aaa1a"/><path d="M590 1062l3 3 5-6" stroke="#fff" fill="none" stroke-width="1.600"/>
<path d="M634 1054l9-1 2 18-9 2z" fill="#eee"/><circle cx="639" cy="1062" r="3" fill="#333"/>
<rect x="677" y="1053" width="18" height="20" fill="#eee" stroke="#777"/><text x="686" y="1069" text-anchor="middle" font-size="15" font-weight="bold" fill="#d11">D</text>
<rect x="723" y="1054" width="18" height="15" fill="#555" stroke="#d11" stroke-width="1.500"/><path d="M732 1069v4M724 1074h16" stroke="#d11" stroke-width="1.500"/>
<rect x="770" y="1055" width="16" height="19" rx="2" fill="#bbb"/><circle cx="778" cy="1065" r="4" fill="#666"/>
<circle cx="822" cy="1062" r="9.500" fill="#e8622a"/><path d="M822 1053c5 1 9 5 9 9s-3 8-8 9c3-2 5-5 4-8-1-4-5-4-7-7 1-1 1-2 2-3z" fill="#f8c03a"/><circle cx="820" cy="1063" r="4.500" fill="#4b2d9a"/>
<text x="836" y="1066" class="t" textLength="154" lengthAdjust="spacingAndGlyphs">Hintergrundfarbe Kon...</text>
<circle cx="1023" cy="1062" r="9.500" fill="#e8622a"/><path d="M1023 1053c5 1 9 5 9 9s-3 8-8 9c3-2 5-5 4-8-1-4-5-4-7-7 1-1 1-2 2-3z" fill="#f8c03a"/><circle cx="1021" cy="1063" r="4.500" fill="#4b2d9a"/>
<text x="1037" y="1066" class="t" textLength="154" lengthAdjust="spacingAndGlyphs">Hintergrundfarbe Kon...</text>
<path d="M1672 1067l6-7 6 7" fill="none" stroke="#ddd" stroke-width="1.300"/>
<rect x="1701" y="1057" width="17" height="10" fill="#eee"/><path d="M1702 1053v5M1706 1053v5" stroke="#eee"/><rect x="1718" y="1059" width="2" height="6" fill="#eee"/>
<rect x="1731" y="1053" width="19" height="15" fill="none" stroke="#eee" stroke-width="1.300"/><path d="M1741 1068v4M1735 1073h12" stroke="#eee"/><rect x="1730" y="1053" width="5" height="7" fill="#2d3236" stroke="#eee"/>
<path d="M1761 1059h3l5-5v16l-5-5h-3zM1772 1058c2 3 2 6 0 9M1775 1055c3 4 3 10 0 15" fill="none" stroke="#ddd" stroke-width="1.200"/>
<text x="1792" y="1067" font-size="14" fill="#fff" textLength="54" lengthAdjust="spacingAndGlyphs">21:58:01</text>
<path d="M1869 1052h19v17h-7l-3 4-2-4h-7z" fill="none" stroke="#eee" stroke-width="1.300"/>
<rect x="1915" y="1042" width="1" height="38" fill="#888"/>

<!-- context menu (on top of everything) -->
<rect x="578" y="138" width="357" height="320" fill="#000" opacity=".5" filter="url(#sh)"/>
<rect x="574" y="134" width="357" height="320" fill="#006"/>
<g fill="#d6d6e0"><rect x="604" y="236" width="327" height="1"/><rect x="604" y="316" width="327" height="1"/><rect x="604" y="396" width="327" height="1"/><rect x="604" y="426" width="327" height="1"/></g>
<text x="609" y="154" class="m" textLength="59" lengthAdjust="spacingAndGlyphs">Öffnen</text>
<text x="609" y="179" class="m" textLength="176" lengthAdjust="spacingAndGlyphs">In neuem Tab öffnen</text>
<text x="609" y="204" class="m" textLength="208" lengthAdjust="spacingAndGlyphs">In neuem Fenster öffnen</text>
<text x="609" y="229" class="m" textLength="284" lengthAdjust="spacingAndGlyphs">In neuem privaten Fenster öffnen</text>
<text x="609" y="259" class="m" textLength="176" lengthAdjust="spacingAndGlyphs">Neues Lesezeichen...</text>
<text x="609" y="284" class="m" textLength="131" lengthAdjust="spacingAndGlyphs">Neuer Ordner...</text>
<text x="609" y="309" class="m" textLength="134" lengthAdjust="spacingAndGlyphs">Neue Trennlinie</text>
<text x="609" y="339" class="m" textLength="117" lengthAdjust="spacingAndGlyphs">Ausschneiden</text>
<text x="609" y="364" class="m" textLength="76" lengthAdjust="spacingAndGlyphs">Kopieren</text>
<text x="609" y="389" class="m" textLength="75" lengthAdjust="spacingAndGlyphs">Einfügen</text>
<text x="609" y="419" class="m" textLength="69" lengthAdjust="spacingAndGlyphs">Löschen</text>
<text x="609" y="449" class="m" textLength="120" lengthAdjust="spacingAndGlyphs">Eigenschaften</text>
</svg>
</body></html>
